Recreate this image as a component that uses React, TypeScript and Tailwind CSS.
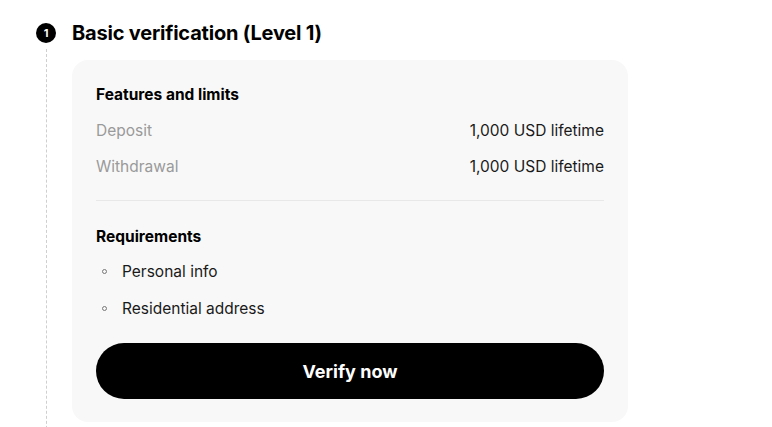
export default function App() {
  const limits = [
    { label: 'Deposit', value: '1,000 USD lifetime' },
    { label: 'Withdrawal', value: '1,000 USD lifetime' },
  ];
  const requirements = ['Personal info', 'Residential address'];

  return (
    <div className="w-[772px] h-[427px] overflow-hidden bg-white font-['Inter',sans-serif] text-black">
      <div className="flex pl-[36px] pt-[23px]">
        {/* step rail */}
        <div className="flex w-[20px] flex-col items-center">
          <div className="flex h-[20px] w-[20px] items-center justify-center rounded-full bg-black text-[11px] font-bold leading-none text-white">
            1
          </div>
          <div className="mt-[6px] h-[400px] border-l border-dashed border-[#cfcfcf]" />
        </div>

        <div className="ml-[16px] flex w-[556px] flex-col">
          <h2 className="h-[20px] text-[20px] font-bold leading-[20px] tracking-[-0.2px]">
            Basic verification (Level 1)
          </h2>

          <div className="mt-[17px] rounded-[16px] bg-[#f8f8f8] px-[24px] pb-[23px] pt-[25px]">
            <div className="text-[15.5px] font-bold leading-[20px]">Features and limits</div>
            <div className="mt-[8px] flex flex-col">
              {limits.map((l) => (
                <div key={l.label} className="flex h-[36px] items-center justify-between text-[15.5px]">
                  <span className="text-[#9a9a9a]">{l.label}</span>
                  <span className="text-[#1a1a1a]">{l.value}</span>
                </div>
              ))}
            </div>

            <div className="mt-[15px] mb-[24px] h-px bg-[#e8e8e8]" />

            <div className="text-[15.5px] font-bold leading-[24px]">Requirements</div>
            <ul className="mt-[4px] flex flex-col">
              {requirements.map((r) => (
                <li key={r} className="flex h-[37px] items-center text-[15.5px] text-[#1a1a1a]">
                  <span className="ml-[6px] mr-[15px] h-[5px] w-[5px] rounded-full border border-[#777]" />
                  {r}
                </li>
              ))}
            </ul>

            <button className="mt-[16px] h-[56px] w-full rounded-full bg-black text-[18px] font-bold text-white">
              Verify now
            </button>
          </div>
        </div>
      </div>
    </div>
  );
}
